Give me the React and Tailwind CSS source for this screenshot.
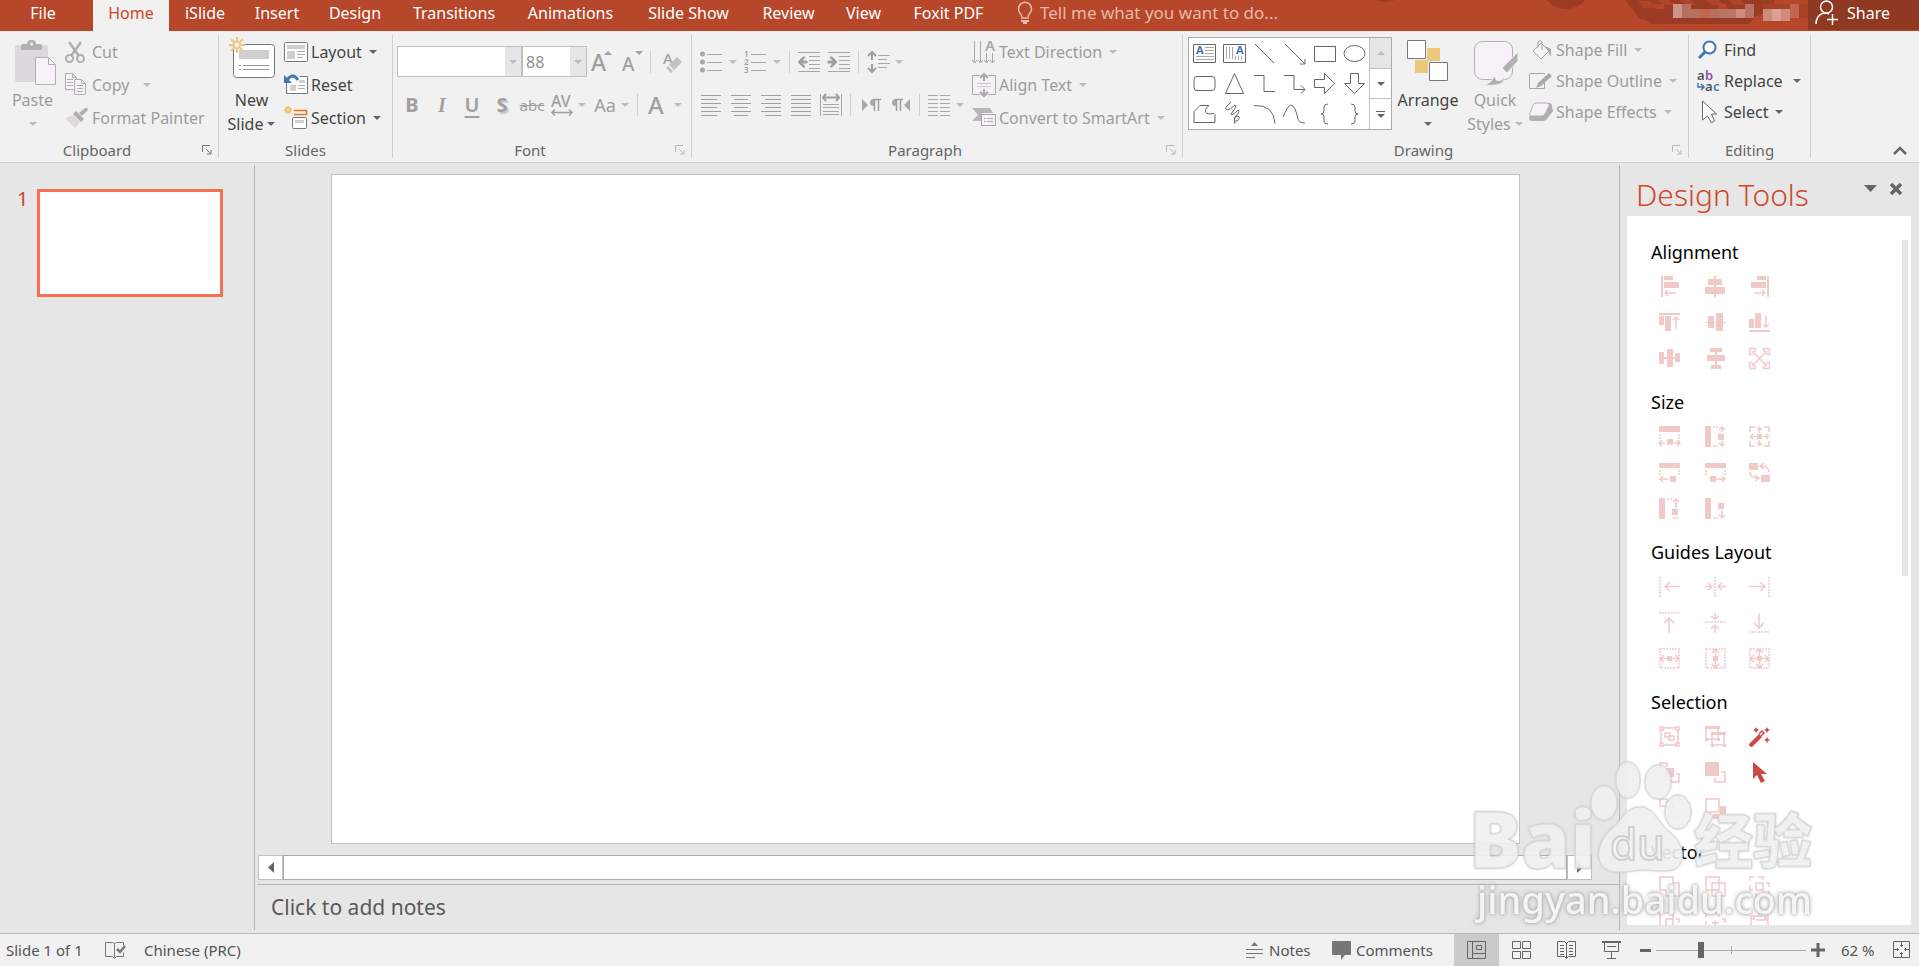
import React, { useState } from "react";

const tabs = [
  { name: "Home", width: "w-[76px]" },
  { name: "iSlide", width: "w-[72px]" },
  { name: "Insert", width: "w-[72px]" },
  { name: "Design", width: "w-[84px]" },
  { name: "Transitions", width: "w-[114px]" },
  { name: "Animations", width: "w-[119px]" },
  { name: "Slide Show", width: "w-[117px]" },
  { name: "Review", width: "w-[83px]" },
  { name: "View", width: "w-[67px]" },
  { name: "Foxit PDF", width: "w-[103px]" },
];

// f = filled path, s = stroked path, d = dotted path
const toolSections = [
  {
    title: "Alignment",
    tools: [
      { name: "Align left", f: "M2 0h2v21h-2z M5 0h9v4h-9z M5 6h15v6h-15z", s: "M6 17h11 M9 14l-3 3l3 3" },
      { name: "Align center", f: "M9 0h2v21h-2z M3 3h14v6h-14z M0 11h20v7h-20z" },
      { name: "Align right", f: "M18 0h2v21h-2z M8 0h9v4h-9z M2 6h15v6h-15z", s: "M5 17h11 M13 14l3 3l-3 3" },
      { name: "Align top", f: "M0 1h21v2h-21z M0 4h5v9h-5z M6 4h6v15h-6z", s: "M17 5v12 M14 8l3-3l3 3" },
      { name: "Align middle", f: "M0 10h21v1h-21z M3 4h6v12h-6z M11 1h7v18h-7z" },
      { name: "Align bottom", f: "M0 18h21v2h-21z M0 7h5v9h-5z M6 1h6v15h-6z", s: "M17 4v11 M14 12l3 3l3-3" },
      { name: "Distribute horizontally", f: "M0 4h5v12h-5z M8 1h6v18h-6z M16 5h5v9h-5z M0 9h21v2h-21z" },
      { name: "Distribute vertically", f: "M5 0h12v4h-12z M2 7h18v6h-18z M6 17h10v4h-10z M10 0h2v21h-2z" },
      { name: "Expand", s: "M3 3l15 15 M18 3L3 18 M0.500 6.500v-5l1-1h5v2l-4 4z M14.500 0.500h5l1 1v5h-2l-4-4z M0.500 14.500v5l1 1h5v-2l-4-4z M14.500 20.500h5l1-1v-5h-2l-4 4z" },
    ],
  },
  {
    title: "Size",
    tools: [
      { name: "Equal width", f: "M0 0h21v6h-21z M8 13h6v6h-6z", s: "M6 17H1 M3 14l-3 3l3 3 M15 17h5 M18 14l3 3l-3 3", d: "M1 8v5 M20 8v5" },
      { name: "Equal height", f: "M0 0h6v21h-6z M13 8h6v6h-6z", s: "M17 6V1 M14 4l3-3l3 3 M17 15v5 M14 17l3 3l3-3", d: "M8 1h6 M8 20h6" },
      { name: "Equal size", f: "M8 8h5v5h-5z", s: "M1 6V1h5 M15 1h5v5 M1 15v5h5 M15 20h5v-5 M10.500 7V2 M8 4l2.500-2.500l2.500 2.500 M10.500 14v5 M8 17l2.500 2.500l2.500-2.500 M7 10.500H1 M4 8l-2.500 2.500l2.500 2.500 M14 10.500h6 M17 8l2.500 2.500l-2.500 2.500" },
      { name: "Stretch left", f: "M0 1h21v5h-21z M11 14h6v6h-6z", s: "M9 17H1 M4 14l-3 3l3 3", d: "M1 8v5 M20 8v5" },
      { name: "Stretch right", f: "M0 1h21v5h-21z M5 14h6v6h-6z", s: "M12 17h8 M17 14l3 3l-3 3", d: "M1 8v5 M20 8v5" },
      { name: "Swap size", f: "M0 1h9v7h-9z M12 13h9v7h-9z", s: "M20 10c0-4-3-6-8-6 M15 1l-4 3l4 3 M1 10c0 4 3 6 8 6 M6 13l4 3l-4 3" },
      { name: "Stretch up", f: "M0 0h6v21h-6z M13 11h6v6h-6z", s: "M17 10V1 M14 4l3-3l3 3", d: "M8 1h6 M14 20h6" },
      { name: "Stretch down", f: "M0 0h6v21h-6z M13 5h6v6h-6z", s: "M17 12v8 M14 17l3 3l3-3", d: "M8 20h6" },
    ],
  },
  {
    title: "Guides Layout",
    tools: [
      { name: "Guide left", s: "M6 10.500h15 M11 6l-5 4.500l5 4.500", d: "M1 1v20" },
      { name: "Guide center", s: "M0 10.500h7 M3 7l4 3.500l-4 3.500 M21 10.500h-7 M17 7l-4 3.500l4 3.500", d: "M10 1v20" },
      { name: "Guide right", s: "M0 10.500h15 M11 6l5 4.500l-5 4.500", d: "M20 1v20" },
      { name: "Guide top", s: "M10 21V6 M5 11l5-5l5 5", d: "M0 1h21" },
      { name: "Guide middle", s: "M10 1v6 M6 4l4 3l4-3 M10 21v-6 M6 17l4-4l4 4", d: "M0 10h21" },
      { name: "Guide bottom", s: "M10 1v14 M5 11l5 5l5-5", d: "M0 20h21" },
      { name: "Guide width", f: "M8 8h5v5h-5z", s: "M1 10.500h19 M5 7l-4 3.500l4 3.500 M16 7l4 3.500l-4 3.500", d: "M1 1h19v19h-19z" },
      { name: "Guide height", f: "M8 8h5v5h-5z", s: "M10.500 1v19 M7 5l3.500-4l3.500 4 M7 16l3.500 4l3.500-4", d: "M1 1h19v19h-19z" },
      { name: "Guide frame", f: "M8 8h5v5h-5z", s: "M10.500 1v19 M7 5l3.500-4l3.500 4 M7 16l3.500 4l3.500-4 M1 10.500h19 M5 7l-4 3.500l4 3.500 M16 7l4 3.500l-4 3.500", d: "M1 1h19v19h-19z" },
    ],
  },
  {
    title: "Selection",
    tools: [
      { name: "Group", s: "M2 4v13 M19 4v13 M4 2h13 M4 19h13 M1 1h3v3h-3z M17 1h3v3h-3z M1 17h3v3h-3z M17 17h3v3h-3z M6 7h5v4h-5z M10 10h5v4h-5z" },
      { name: "Select overlap", f: "M0 0h15v3h-15z M6 6h15v3h-15z M0 12h3v3h-3z M12 12h3v3h-3z M6 18h3v3h-3z M18 18h3v3h-3z", s: "M1 2v11h12v-11 M7 8v11h12v-11" },
      { name: "Magic select", active: true, f: "M0 18l10-10l3 3l-10 10h-1l-2-2z M7 1l1 2l2 1l-2 1l-1 2l-1-2l-2-1l2-1z M18 1l1 2l2 1l-2 1l-1 2l-1-2l-2-1l2-1z M18 11l1 2l2 1l-2 1l-1 2l-1-2l-2-1l2-1z", s: "M10 8l3-3l2 2l-3 3" },
      { name: "Send back", f: "M6 6h9v9h-9z", s: "M1 8V1h7v4 M4 10H1V8 M17 12h3v8h-8v-3" },
      { name: "Bring front", f: "M0 0h14v14h-14z", s: "M16 10h4v10h-10v-4" },
      { name: "Select objects", active: true, f: "M4 0v17l4-4l4 8l4-2l-4-7h6z" },
      { name: "Similar", f: "M7 8h3v3h-3z M11 6h4v4h-4z", s: "M1 1h7v7h-7z M12 12h8v8h-8z" },
      { name: "Invert", f: "M15 8h6v8h-6z M8 16h7v5h-7z", s: "M1 1h13v13h-13z" },
    ],
  },
  {
    title: "Vector",
    tools: [
      { name: "Union", s: "M1 1h13v6h6v13h-13v-6h-6z" },
      { name: "Combine", s: "M1 1h13v13h-13z M7 7h13v13h-13z" },
      { name: "Intersect", s: "M7 7h7v7h-7z M1 5v-4h4 M9 1h5v3 M1 9v5h3 M17 7h3v4 M20 15v5h-4 M12 20h-5v-3" },
      { name: "Subtract", s: "M1 1h13v6h-7v7h-6z M7 7h7v7h-7z M17 7h3v4 M20 15v5h-4" },
      { name: "Fragment", s: "M1 5v-4h4 M9 1h5v4 M1 9v5h3 M17 7h3v4 M10 8v6 M7 11h7 M20 15v5h-4" },
      { name: "Edit points", s: "M1 14h3v3h-3z M2 14V6 M5 4h5 M10 1h3v3h-3z M2 4h3v3h-3z M16 4h3v3h-3z M7 8h12v10" },
    ],
  },
];

const Caret = ({ light, className = "" }) => (
  <svg width="8" height="4" viewBox="0 0 8 4" className={`shrink-0 ${className}`}>
    <path d="M0 0h8L4 4z" fill={light ? "#bcbcbc" : "#666"} />
  </svg>
);

const Divider = ({ className = "" }) => <span className={`h-[22px] w-px bg-[#cfcfcf] ${className}`} />;

const Svg = ({ w = 24, h = 24, children, className = "" }) => (
  <svg width={w} height={h} viewBox={`0 0 ${w} ${h}`} fill="none" className={`shrink-0 overflow-visible ${className}`}>
    {children}
  </svg>
);

const Group = ({ label, width, children, launcher, darkLauncher }) => (
  <section aria-label={label} className={`relative flex shrink-0 flex-col justify-between border-r border-[#d0d0d0] ${width}`}>
    <div className="flex">{children}</div>
    <div className={`text-center text-[15px] leading-4 text-[#666] ${launcher ? "pr-6" : ""}`}>{label}</div>
    {launcher && (
      <button aria-label={`${label} options`} className="absolute right-[6px] bottom-[3px]">
        <Svg w={10} h={10}>
          <path d="M0.500 7V0.500H8M4 4l5 5M9 5v4H5" stroke={darkLauncher ? "#777" : "#b8b8b8"} />
        </Svg>
      </button>
    )}
  </section>
);

// Small ribbon command: icon, text and an optional drop-down arrow
const Command = ({ icon, label, caret, light, row = "h-[33px]", caretGap = "ml-[7px]" }) => (
  <button className={`flex items-center text-base whitespace-nowrap ${row} ${light ? "text-[#9c9c9c]" : "text-[#444]"}`}>
    <span className="mr-px flex w-[26px] shrink-0 justify-start">{icon}</span>
    {label}
    {caret && <Caret light={light} className={caretGap} />}
  </button>
);

const BigCommand = ({ icon, line1, line2, caretOnly, light, width }) => (
  <button className={`flex shrink-0 flex-col items-center text-base leading-6 ${width} ${light ? "text-[#9c9c9c]" : "text-[#444]"}`}>
    <span className="flex h-[53px] items-start justify-center">{icon}</span>
    <span className="h-6">{line1}</span>
    <span className="flex h-6 items-center gap-1">
      {!caretOnly && line2}
      <Caret light={light} />
    </span>
  </button>
);

const PasteIcon = () => (
  <Svg w={42} h={46} className="mt-[5px]">
    <rect x="0" y="5" width="33" height="37" rx="2" fill="#dcd8dc" />
    <path d="M6 10V6q0-2 2-2h4q0-4 4-4h1q4 0 4 4h4q2 0 2 2v4z" fill="#b2b0b2" />
    <circle cx="16.500" cy="4" r="1.500" fill="#f1f1f1" />
    <path d="M20.500 17.500h13l7 7v20h-20z" fill="#f5f1f6" stroke="#b2b0b2" />
    <path d="M33.500 17.500v7h7" stroke="#b2b0b2" />
  </Svg>
);

const CutIcon = () => (
  <Svg w={20} h={22}>
    <path d="M4 1l10 14M16 1L6 15" stroke="#b0aeb0" strokeWidth="2.500" />
    <circle cx="4.500" cy="17.500" r="3.500" stroke="#b0aeb0" strokeWidth="2" />
    <circle cx="15.500" cy="17.500" r="3.500" stroke="#b0aeb0" strokeWidth="2" />
  </Svg>
);

const CopyIcon = () => (
  <Svg w={21} h={23}>
    <path d="M0.500 0.500h7l4 4v12h-11z M7.500 0.500v4h4" fill="#f5f1f6" stroke="#b0aeb0" />
    <path d="M2 6.500h6M2 9.500h6M2 12.500h6" stroke="#b0aeb0" />
    <path d="M9.500 6.500h7l4 4v11h-11z M16.500 6.500v4h4" fill="#f5f1f6" stroke="#b0aeb0" />
    <path d="M12 12.500h6M12 15.500h6M12 18.500h6" stroke="#b0aeb0" />
  </Svg>
);

const BrushIcon = () => (
  <Svg w={24} h={22}>
    <path d="M0 11l8-3l7 7l-5 6z" fill="#dcd8dc" />
    <path d="M8 7l3-3l8 8l-3 3z M14 6l6-5q3-1 3 2l-6 6z" fill="#b0aeb0" />
  </Svg>
);

const Sun = ({ x, y, r }) => (
  <g transform={`translate(${x} ${y})`} stroke="#efc77c" strokeWidth="2">
    <circle r={r * 0.4} fill="#fff" />
    {[0, 45, 90, 135, 180, 225, 270, 315].map((a) => (
      <path key={a} d={`M${r * 0.5} 0H${r}`} transform={`rotate(${a})`} />
    ))}
  </g>
);

const NewSlideIcon = () => (
  <Svg w={46} h={42} className="mt-[2px]">
    <rect x="4.500" y="7.500" width="41" height="33" rx="3" fill="#fff" stroke="#777" />
    <path d="M10 13h30v9h-30z" fill="#cfcfcf" />
    <path d="M10 28.500h2M14 28.500h26M10 32.500h2M14 32.500h26" stroke="#999" />
    <rect x="0" y="0" width="12" height="12" fill="#f1f1f1" />
    <Sun x={8} y={8} r={8} />
  </Svg>
);

const LayoutIcon = () => (
  <Svg w={24} h={20}>
    <rect x="0.500" y="0.500" width="23" height="19" rx="1" fill="#fff" stroke="#777" />
    <path d="M3 3h18v4h-18z M3 9h8v8h-8z" fill="#cfcfcf" />
    <path d="M13 9.500h8M13 12.500h8M13 15.500h6" stroke="#aaa" />
  </Svg>
);

const ResetIcon = () => (
  <Svg w={24} h={21}>
    <path d="M2.500 5v14.500h21v-17h-8" fill="#fff" stroke="#777" />
    <path d="M6 11h6v6h-6z M15 6h6v3h-6z" fill="#cfcfcf" />
    <path d="M14 11.500h7M14 14.500h7" stroke="#aaa" />
    <path d="M14 6Q9-2 3 6" stroke="#3f77b5" strokeWidth="3" />
    <path d="M0 1v8h8z" fill="#3f77b5" />
  </Svg>
);

const SectionIcon = () => (
  <Svg w={24} h={23}>
    <Sun x={4} y={4} r={4} />
    <path d="M10 4.500h12.500v4H10" stroke="#e0781e" strokeWidth="1.500" />
    <rect x="8.500" y="11.500" width="14" height="11" rx="1" fill="#fff" stroke="#777" />
    <path d="M11 14h9v3h-9z" fill="#cfcfcf" />
  </Svg>
);

const lines = (rows) => rows.map(([a, b], i) => `M${a} ${i * 4 + 1.5}H${b}`).join("");

const justifyIcons = [
  { name: "Align Left", d: lines([[1, 21], [1, 17], [1, 21], [1, 17], [1, 21], [1, 17]]) },
  { name: "Center", d: lines([[1, 21], [4, 18], [1, 21], [4, 18], [1, 21], [4, 18]]) },
  { name: "Align Right", d: lines([[1, 21], [5, 21], [1, 21], [5, 21], [1, 21], [5, 21]]) },
  { name: "Justify", d: lines([[1, 21], [1, 21], [1, 21], [1, 21], [1, 21], [1, 21]]) },
];

const shapeIcons = [
  { name: "Text box", text: true, d: "M0.500 2.500h22v18h-22z", g: "M12 5.500h9M12 8.500h9M12 11.500h9M3 14.500h18M3 17.500h18" },
  { name: "Vertical text box", text: true, right: true, d: "M0.500 2.500h22v18h-22z", g: "M3.500 5v12M6.500 5v12M9.500 5v12M12.500 14v4M15.500 14v4M18.500 14v4" },
  { name: "Line", d: "M2 2l19 19" },
  { name: "Arrow", d: "M2 2l20 20M22 17v5h-5" },
  { name: "Rectangle", d: "M1.500 4.500h21v15h-21z" },
  { name: "Oval", d: "M1 11.500a10.500 8 0 1 0 21 0a10.500 8 0 1 0-21 0" },
  { name: "Rounded rectangle", d: "M4 4.500h15q3 0 3 3v8q0 3-3 3h-15q-3 0-3-3v-8q0-3 3-3z" },
  { name: "Triangle", d: "M11.500 1.500l9 20h-18z" },
  { name: "Elbow connector", d: "M1 3.500h10v16h11" },
  { name: "Elbow arrow", d: "M1 3.500h10v14h11M18 13.500l4 4l-4 4" },
  { name: "Right arrow", d: "M1.500 7.500h10v-6l10 10l-10 10v-6h-10z" },
  { name: "Down arrow", d: "M7.500 1.500h8v10h6l-10 10l-10-10h6z" },
  { name: "Freeform", d: "M7 3.500h9q-5 4-3 7q1 2 8 1l1 1v8h-21v-11z" },
  { name: "Scribble", d: "M8 0q-8 7-4 8q3 0 8-5q3 0-4 9q0 3 7-4q3 1-3 7q-2 5 2 4q4-3 1-5q-5 0-3 8" },
  { name: "Arc", d: "M1 3.500q20-1 21 18" },
  { name: "Curve", d: "M0 15Q5 3 8 3q4 0 7 14q1 4 7 4" },
  { name: "Left brace", d: "M15 2q-4 0-4 3v4q0 3-3 3q3 0 3 3v4q0 3 4 3" },
  { name: "Right brace", d: "M8 2q4 0 4 3v4q0 3 3 3q-3 0-3 3v4q0 3-4 3" },
];

const FontGroup = () => (
  <Group label="Font" width="w-[299px]" launcher>
    <div className="flex flex-col gap-[13px] pt-[11px] pl-1 text-[#a0a0a0]">
      <div className="flex h-[31px] items-center">
        <div className="flex h-[31px] w-[125px] border border-[#c0c0c0] bg-white">
          <input aria-label="Font name" className="w-0 flex-1 px-1 outline-none" />
          <button aria-label="Font list" className="flex w-4 items-center justify-center bg-[#e6e6e6]">
            <Caret light />
          </button>
        </div>
        <div className="flex h-[31px] w-[65px] border border-[#c0c0c0] bg-white">
          <input aria-label="Font size" defaultValue="88" className="w-0 flex-1 pl-[3px] text-base text-[#909090] outline-none" />
          <button aria-label="Size list" className="flex w-4 items-center justify-center bg-[#e6e6e6]">
            <Caret light />
          </button>
        </div>
        <button aria-label="Increase font size" className="flex w-[30px] items-center justify-center">
          <Svg w={22} h={24}>
            <text x="0" y="21" fontSize="23" fontWeight="500" fill="#a0a0a0">A</text>
            <path d="M13 5h8l-4-4z" fill="#a0a0a0" />
          </Svg>
        </button>
        <button aria-label="Decrease font size" className="flex w-[30px] items-center justify-center">
          <Svg w={22} h={24}>
            <text x="1" y="21" fontSize="19" fontWeight="500" fill="#a0a0a0">A</text>
            <path d="M14 1h8l-4 4z" fill="#a0a0a0" />
          </Svg>
        </button>
        <Divider className="mr-[12px] ml-[3px]" />
        <button aria-label="Clear formatting">
          <Svg w={20} h={22}>
            <text x="0" y="13" fontSize="15" fontWeight="500" fill="#a0a0a0">A</text>
            <path d="M14 6l5 5l-8 8l-5-5z" fill="#c4c0c6" />
            <path d="M5 15l5 5l-2 2l-5-5z" fill="#c4c0c6" />
          </Svg>
        </button>
      </div>
      <div className="flex h-[30px] items-center text-xl">
        <button className="w-[30px] font-bold">B</button>
        <button className="w-[30px] font-['Liberation_Serif',serif] font-bold italic">I</button>
        <button className="w-[30px] font-semibold underline underline-offset-4">U</button>
        <button className="w-[30px] font-bold text-shadow-[2px_2px_1px_#c8c8c8]">S</button>
        <button className="w-[30px] text-[15px] line-through">abc</button>
        <button aria-label="Character spacing" className="flex w-[44px] items-center gap-[5px] pl-1">
          <Svg w={22} h={22}>
            <text x="0" y="13" fontSize="16" fontWeight="500" fill="#a0a0a0">AV</text>
            <path d="M1 18.500h20M4 15.500l-3 3l3 3M18 15.500l3 3l-3 3" stroke="#a0a0a0" strokeWidth="1.500" />
          </Svg>
          <Caret light />
        </button>
        <button className="flex items-center gap-1 pl-[2px]">
          <span className="w-6 text-lg">Aa</span>
          <Caret light />
        </button>
        <Divider className="mr-[10px] ml-2" />
        <button aria-label="Font color" className="flex items-center gap-[10px] text-2xl leading-[30px] font-medium">
          A
          <Caret light />
        </button>
      </div>
    </div>
  </Group>
);

const ParagraphGroup = () => (
  <Group label="Paragraph" width="w-[491px]" launcher>
    <div className="flex w-[280px] shrink-0 flex-col gap-[13px] pt-[11px] pl-2">
      <div className="flex h-[31px] items-center">
        <button aria-label="Bullets" className="flex items-center gap-[7px]">
          <Svg w={22} h={22}>
            <path d="M7 3.500h15M7 11.500h15M7 19.500h15" stroke="#a8a8a8" />
            <circle cx="2.500" cy="3" r="2.500" fill="#a8a8a8" />
            <circle cx="2.500" cy="11" r="2.500" fill="#a8a8a8" />
            <circle cx="2.500" cy="19" r="2.500" fill="#a8a8a8" />
          </Svg>
          <Caret light />
        </button>
        <button aria-label="Numbering" className="ml-[7px] flex items-center gap-[7px]">
          <Svg w={22} h={24}>
            <path d="M7 4.500h15M7 12.500h15M7 20.500h15" stroke="#a8a8a8" />
            <text x="0" y="7" fontSize="8" fontWeight="600" fill="#a0a0a0">1</text>
            <text x="0" y="15" fontSize="8" fontWeight="600" fill="#a0a0a0">2</text>
            <text x="0" y="23" fontSize="8" fontWeight="600" fill="#a0a0a0">3</text>
          </Svg>
          <Caret light />
        </button>
        <Divider className="mx-2" />
        <button aria-label="Decrease indent" className="mr-2">
          <Svg w={22} h={22}>
            <path d="M0 1.500h22M11 5.500h11M11 9.500h11M11 13.500h11M11 17.500h11M0 20.500h22" stroke="#a8a8a8" />
            <path d="M0 11l5-5h2l-3 4h5v2h-5l3 4h-2z" fill="#a0a0a0" stroke="#a0a0a0" />
          </Svg>
        </button>
        <button aria-label="Increase indent">
          <Svg w={22} h={22}>
            <path d="M0 1.500h22M11 5.500h11M11 9.500h11M11 13.500h11M11 17.500h11M0 20.500h22" stroke="#a8a8a8" />
            <path d="M9 11l-5-5h-2l3 4h-5v2h5l-3 4h2z" fill="#a0a0a0" stroke="#a0a0a0" />
          </Svg>
        </button>
        <Divider className="mr-[9px] ml-2" />
        <button aria-label="Line spacing" className="flex items-center gap-[5px]">
          <Svg w={22} h={24}>
            <path d="M4 3v7M0 6l4-4l4 4M4 14v7M0 18l4 4l4-4" stroke="#a0a0a0" strokeWidth="2" />
            <path d="M10 5.500h12M10 9.500h9M10 13.500h12M10 17.500h9" stroke="#a8a8a8" />
          </Svg>
          <Caret light />
        </button>
      </div>
      <div className="flex h-[30px] items-center gap-2">
        {justifyIcons.map((icon) => (
          <button key={icon.name} aria-label={icon.name}>
            <Svg w={22} h={22}>
              <path d={icon.d} stroke="#a0a0a0" />
            </Svg>
          </button>
        ))}
        <button aria-label="Distribute">
          <Svg w={22} h={24}>
            <path d="M0.500 1v22M21.500 1v22M3 11.500h16M3 14.500h16M3 18.500h16M3 21.500h16" stroke="#a8a8a8" />
            <path d="M3 4.500h16M6 1l-3 3.500l3 3.500M16 1l3 3.500l-3 3.500" stroke="#a0a0a0" strokeWidth="2" />
          </Svg>
        </button>
        <Divider />
        <button aria-label="Left to right" className="w-[22px] pl-[3px]">
          <Svg w={19} h={14}>
            <path d="M0 1l6 6l-6 6z M8 5q0-4 4-4v7q-4 0-4-3z" fill="#a8a8a8" />
            <path d="M11 1.500h8M12.500 1v12M16.500 1v12" stroke="#a0a0a0" strokeWidth="1.500" />
          </Svg>
        </button>
        <button aria-label="Right to left" className="w-[22px] pl-[3px]">
          <Svg w={19} h={14}>
            <path d="M18 1l-6 6l6 6z M0 5q0-4 4-4v7q-4 0-4-3z" fill="#a8a8a8" />
            <path d="M3 1.500h8M4.500 1v12M8.500 1v12" stroke="#a0a0a0" strokeWidth="1.500" />
          </Svg>
        </button>
        <Divider />
        <button aria-label="Columns" className="flex items-center gap-[6px]">
          <Svg w={22} h={22}>
            <path d="M0 1.500h10M0 5.500h10M0 9.500h10M0 13.500h10M0 17.500h10M0 21.500h10" stroke="#a8a8a8" />
            <path d="M12 1.500h10M12 5.500h10M12 9.500h10M12 13.500h10M12 17.500h10M12 21.500h10" stroke="#a8a8a8" />
          </Svg>
          <Caret light />
        </button>
      </div>
    </div>
    <div className="flex flex-col">
      <Command
        light
        caret
        label="Text Direction"
        icon={
          <Svg w={24} h={24}>
            <path d="M2.500 1v22M8.500 1v22M14.500 13v10M20.500 13v10M0 20l2.500 3l2.500-3M6 20l2.500 3l2.500-3M12 20l2.500 3l2.500-3M18 20l2.500 3l2.500-3" stroke="#a8a8a8" />
            <text x="13" y="11" fontSize="15" fontWeight="600" fill="#a8a8a8">A</text>
          </Svg>
        }
      />
      <Command
        light
        caret
        label="Align Text"
        icon={
          <Svg w={24} h={24}>
            <path d="M8 2.500h-7.500v19h7.500M16 2.500h7.500v19h-7.500" fill="#f5f1f6" stroke="#a8a8a8" />
            <path d="M5 10.500h14M5 13.500h14" stroke="#cbc6cf" />
            <path d="M12 8V2M8 5l4-4l4 4M12 16v6M8 19l4 4l4-4" stroke="#a8a8a8" strokeWidth="2" />
          </Svg>
        }
      />
      <Command
        light
        caret
        label="Convert to SmartArt"
        icon={
          <Svg w={24} h={19}>
            <path d="M0 0h18l3 5h-11v8h-10l6-6z" fill="#b8b6b8" />
            <rect x="9.500" y="6.500" width="14" height="11" fill="#f5f1f6" stroke="#a8a8a8" />
            <path d="M12 10.500h2M15 10.500h6M12 13.500h2M15 13.500h6" stroke="#b0aeb0" />
          </Svg>
        }
      />
    </div>
  </Group>
);

const DrawingGroup = () => (
  <Group label="Drawing" width="w-[506px]" launcher>
    <div className="mt-[2px] ml-[5px] flex h-[93px] shrink-0 border border-[#ababab] bg-white">
      <div className="grid grid-cols-6">
        {shapeIcons.map((shape) => (
          <button key={shape.name} aria-label={shape.name} className="flex h-[30px] w-[30px] items-center justify-center">
            <Svg w={23} h={23}>
              <path d={shape.d} stroke="#666" />
              {shape.g && <path d={shape.g} stroke="#aaa" />}
              {shape.text && (
                <text x={shape.right ? 13 : 3} y="12" fontSize="11" fontWeight="700" fill="#3f77b5">A</text>
              )}
            </Svg>
          </button>
        ))}
      </div>
      <div className="flex w-[22px] flex-col border-l border-[#c0c0c0]">
        <button aria-label="Scroll up" className="flex flex-1 items-center justify-center bg-[#e6e6e6]">
          <Caret light className="rotate-180" />
        </button>
        <button aria-label="Scroll down" className="flex flex-1 items-center justify-center border-y border-[#c0c0c0]">
          <Caret />
        </button>
        <button aria-label="More shapes" className="flex flex-1 flex-col items-center justify-center gap-[2px]">
          <span className="h-px w-[9px] bg-[#666]" />
          <Caret />
        </button>
      </div>
    </div>
    <BigCommand
      width="w-[72px]"
      line1="Arrange"
      caretOnly
      icon={
        <Svg w={42} h={42} className="mt-[5px]">
          <path d="M20 8h13v13h-13z M8 20h13v13h-13z" fill="#efc77c" />
          <path d="M0.500 0.500h18v18h-18z M22.500 22.500h18v18h-18z" fill="#fff" stroke="#777" />
        </Svg>
      }
    />
    <BigCommand
      width="w-[62px]"
      light
      line1="Quick"
      line2="Styles"
      icon={
        <Svg w={46} h={46} className="mt-[5px]">
          <rect x="2.500" y="1.500" width="38" height="38" rx="8" fill="#f5f1f6" stroke="#b2b0b2" />
          <path d="M46 12v9l-11 12l-5-5z" fill="#b2b0b2" stroke="#f1f1f1" />
          <path d="M13 45q6-2 9-8q5-5 9-1q3 5-3 8q-5 2-15 1z" fill="#b2b0b2" stroke="#f1f1f1" />
          <circle cx="27" cy="37" r="4" fill="#f5f1f6" />
        </Svg>
      }
    />
    <div className="-mt-px flex flex-col pl-[3px]">
      <Command
        light
        caret
        row="h-[31px]"
        label="Shape Fill"
        icon={
          <Svg w={24} h={20}>
            <path d="M4 11l8-8l8 8l-8 8z" fill="#f5f1f6" stroke="#a8a8a8" />
            <path d="M9 8V2q2-3 4 0v8" stroke="#a8a8a8" />
            <path d="M16 6l6 3v8l-3-6z" fill="#a8a8a8" />
          </Svg>
        }
      />
      <Command
        light
        caret
        row="h-[31px]"
        label="Shape Outline"
        icon={
          <Svg w={24} h={18}>
            <path d="M16 1.500h-15.500v15h15v-6" stroke="#a8a8a8" />
            <path d="M7 16l2-5l11-10l3 3l-11 10z" fill="#a8a8a8" />
          </Svg>
        }
      />
      <Command
        light
        caret
        row="h-[31px]"
        label="Shape Effects"
        icon={
          <Svg w={24} h={20}>
            <path d="M6 1h14q3 0 3 3l1 5l-6 8q-2 2-4 2h-11q-3 0-3-3z" fill="#b2b0b2" />
            <path d="M7 1h11q3 0 2 3l-4 8q-1 2-3 2h-11q-2 0-1-3l3-8q1-2 3-2z" fill="#f5f1f6" stroke="#b2b0b2" />
          </Svg>
        }
      />
    </div>
  </Group>
);

const TitleArt = () => (
  <svg width="440" height="31" viewBox="0 0 440 31" className="absolute top-0 right-[111px]" aria-hidden="true">
    <g fill="#9c3b24">
      <path d="M7 0h20q-10 4-20 0z" />
      <circle cx="198" cy="-16" r="25" />
      <path d="M257 0h150q-2 10-22 18v2l-5 4h-97l-8-5h-3z" />
    </g>
    <path d="M270 1l6 7h14l-8-7z M290 0l6 5h12l-7-5z M312 0l6 5h10l-5-5z M338 0l6 5h12l-5-5z M360 0l6 5h12l-5-5z" fill="#b0442a" />
    <g>
      <path d="M287 4h9v5h-9z M350 4h9v5h-9z" fill="#b7472a" />
      <path d="M305 4h9v14h-9z" fill="#cf938a" />
      <path d="M314 4h9v14h-9z M323 9h9v9h-9z M341 9h9v9h-9z" fill="#b5705f" />
      <path d="M332 9h9v9h-9z" fill="#c2664f" />
      <path d="M350 9h18v9h-18z M377 4h9v14h-9z" fill="#b87565" />
      <path d="M368 9h9v9h-9z" fill="#cf8c7d" />
      <path d="M395 9h9v12h-9z M413 9h9v12h-9z" fill="#cf8c7d" />
      <path d="M404 9h9v12h-9z" fill="#d9a093" />
      <path d="M422 4h9v14h-9z" fill="#c2664f" />
      <path d="M395 4h27v5h-27z M431 4h9v14h-9z" fill="#a94028" />
    </g>
  </svg>
);

const Header = ({ current, onSelect }) => (
  <header className="relative flex h-[31px] shrink-0 items-center bg-[#b7472a] pb-[5px] text-base whitespace-nowrap text-white">
    <TitleArt />
    <button className="mr-[7px] w-[86px]">File</button>
    <nav className="flex self-stretch">
      {tabs.map((tab) => (
        <button
          key={tab.name}
          onClick={() => onSelect(tab.name)}
          className={`h-[31px] pb-[5px] ${tab.width} ${current === tab.name ? "bg-[#f1f1f1] text-[#d24726]" : ""}`}
        >
          {tab.name}
        </button>
      ))}
    </nav>
    <label className="ml-[17px] flex items-center gap-[7px] text-[#e9b9a9]">
      <Svg w={16} h={22}>
        <path d="M5 16q0-3-2-5a6.500 6.500 0 1 1 10 0q-2 2-2 5z" stroke="#e9b9a9" strokeWidth="1.500" />
        <path d="M4 18h8v2h-8z M6 20h4v2h-4z" fill="#e9b9a9" />
      </Svg>
      <input
        aria-label="Tell me"
        placeholder="Tell me what you want to do..."
        className="h-6 w-[270px] text-[17px] outline-none placeholder:text-[#e9b9a9]"
      />
    </label>
    <button className="relative ml-auto flex h-[30px] w-[111px] items-center gap-2 self-start bg-[#8f3822] pb-[5px] pl-[7px]">
      <Svg w={24} h={25}>
        <circle cx="11.500" cy="7" r="6" stroke="#fff" strokeWidth="1.500" />
        <path d="M1 24q0-9 8-11q3 0 5 1M17.500 14v11M12 19.500h11" stroke="#fff" strokeWidth="1.500" />
      </Svg>
      Share
    </button>
  </header>
);

const Ribbon = () => (
  <div className="flex h-[132px] shrink-0 border-b border-[#d0d0d0] bg-[#f1f1f1] py-1">
    <Group label="Clipboard" width="w-[219px]" launcher darkLauncher>
      <BigCommand width="w-[65px]" light line1="Paste" caretOnly icon={<span className="pl-[7px]"><PasteIcon /></span>} />
      <div className="flex flex-col">
        <Command light label="Cut" icon={<CutIcon />} />
        <Command light label="Copy" caret caretGap="ml-[14px]" icon={<CopyIcon />} />
        <Command light label="Format Painter" icon={<BrushIcon />} />
      </div>
    </Group>

    <Group label="Slides" width="w-[174px]">
      <BigCommand width="w-[65px]" line1="New" line2="Slide" icon={<NewSlideIcon />} />
      <div className="flex flex-col">
        <Command label="Layout" caret icon={<LayoutIcon />} />
        <Command label="Reset" icon={<ResetIcon />} />
        <Command label="Section" caret icon={<SectionIcon />} />
      </div>
    </Group>

    <FontGroup />
    <ParagraphGroup />
    <DrawingGroup />

    <Group label="Editing" width="w-[122px]">
      <div className="-mt-px flex flex-col pl-[8px]">
        <Command
          row="h-[31px]"
          label="Find"
          icon={
            <Svg w={21} h={20}>
              <circle cx="12.500" cy="7.500" r="6" fill="#fff" stroke="#3f77b5" strokeWidth="2" />
              <path d="M8 12l-6 6" stroke="#3f77b5" strokeWidth="3" />
            </Svg>
          }
        />
        <Command
          row="h-[31px]"
          label="Replace"
          caret
          caretGap="ml-[10px]"
          icon={
            <Svg w={24} h={24}>
              <text x="0" y="11" fontSize="13" fontWeight="600" fill="#555">a</text>
              <text x="8" y="11" fontSize="13" fontWeight="600" fill="#8a53ab">b</text>
              <text x="8" y="22" fontSize="13" fontWeight="600" fill="#555">a</text>
              <text x="16" y="22" fontSize="13" fontWeight="600" fill="#3f77b5">c</text>
              <path d="M1 14v4h5M4 15l3 3l-3 3" stroke="#3f77b5" strokeWidth="1.500" />
            </Svg>
          }
        />
        <Command
          row="h-[31px]"
          label="Select"
          caret
          icon={
            <Svg w={20} h={24} className="ml-[5px]">
              <path d="M0.500 1v19l5-4l4 7l3-2l-3-7h5z" fill="#fff" stroke="#666" />
            </Svg>
          }
        />
      </div>
    </Group>

    <button aria-label="Collapse the ribbon" className="mr-3 mb-[3px] ml-auto self-end">
      <Svg w={14} h={9}>
        <path d="M1 8l6-6l6 6" stroke="#666" strokeWidth="2.500" />
      </Svg>
    </button>
  </div>
);

const ToolIcon = ({ tool }) => {
  const color = tool.active ? "#cd4747" : "#f1c9c9";
  return (
    <Svg w={21} h={21}>
      {tool.f && <path d={tool.f} fill={color} />}
      {tool.s && <path d={tool.s} stroke={color} strokeWidth="1.500" />}
      {tool.d && <path d={tool.d} stroke={color} strokeWidth="1.500" strokeDasharray="2 1" />}
    </Svg>
  );
};

const DesignPane = () => (
  <aside className="mt-[2px] mb-[3px] flex w-[300px] shrink-0 flex-col border-l border-[#b8b8b8] pr-2 pl-[7px]">
    <div className="flex h-[51px] shrink-0 items-center pb-1 pl-[9px]">
      <h2 className="pt-3 text-[30px] leading-9 font-light text-[#d24726]">Design Tools</h2>
      <button aria-label="Pane options" className="mr-3 ml-auto">
        <svg width="13" height="7" viewBox="0 0 13 7">
          <path d="M0 0h13l-6.500 7z" fill="#666" />
        </svg>
      </button>
      <button aria-label="Close pane" className="mr-2">
        <Svg w={14} h={14}>
          <path d="M2 2l10 10M12 2L2 12" stroke="#666" strokeWidth="3.500" />
        </Svg>
      </button>
    </div>
    <div className="mb-[5px] flex min-h-0 flex-1 justify-between overflow-hidden bg-white pr-[3px]">
      <div className="pt-[18px] pl-6">
        {toolSections.map((section) => (
          <section key={section.title} className="pb-2">
            <h3 className="h-[34px] text-lg leading-9 text-black">{section.title}</h3>
            <div className="grid grid-cols-[46px_44px_45px]">
              {section.tools.map((tool) => (
                <button key={tool.name} aria-label={tool.name} className="flex h-9 items-center pl-2">
                  <ToolIcon tool={tool} />
                </button>
              ))}
            </div>
          </section>
        ))}
      </div>
      <div className="mt-6 h-[336px] w-[6px] bg-[#e6e6e6]" />
    </div>
  </aside>
);

const Workspace = () => (
  <main className="flex min-w-0 flex-1 flex-col">
    <div className="mt-[11px] mr-[99px] ml-[76px] flex-1 border border-[#c0c0c0] bg-white" />
    <div className="mt-[11px] mr-[27px] ml-[3px] flex h-[25px]">
      <button aria-label="Scroll left" className="flex w-[25px] items-center justify-center border border-[#c0c0c0] bg-white">
        <svg width="6" height="11" viewBox="0 0 6 11">
          <path d="M6 0v11l-6-5.500z" fill="#666" />
        </svg>
      </button>
      <div className="flex-1 border border-[#ababab] bg-white" />
      <button aria-label="Scroll right" className="flex w-[25px] items-center justify-center border border-[#c0c0c0] bg-white">
        <svg width="6" height="11" viewBox="0 0 6 11">
          <path d="M0 0v11l6-5.500z" fill="#666" />
        </svg>
      </button>
    </div>
    <div className="mt-1 ml-[2px] h-[49px] border-t border-[#b8b8b8]">
      <textarea
        aria-label="Notes"
        placeholder="Click to add notes"
        className="h-[44px] w-full resize-none pt-2 pl-[14px] text-[21px] leading-7 outline-none placeholder:text-[#595959]"
      />
    </div>
  </main>
);

const Watermark = () => (
  <svg
    width="352"
    height="180"
    viewBox="0 0 352 180"
    className="pointer-events-none absolute right-[97px] bottom-[6px] drop-shadow-[0_0_1px_#bbb]"
    aria-hidden="true"
  >
    <g fill="#fff" fillOpacity="0.700" stroke="#d8d8d8" strokeWidth="1">
      <text x="-1" y="121" fontSize="78" fontWeight="800" className="font-['Open_Sans',sans-serif]">Bai</text>
      <ellipse cx="134" cy="56" rx="13" ry="17" />
      <ellipse cx="158" cy="33" rx="12" ry="18" />
      <ellipse cx="188" cy="35" rx="13" ry="17" />
      <ellipse cx="208" cy="65" rx="13" ry="17" />
      <path d="M170 60c-14 0-18 14-28 22c-10 8-16 22-12 32c6 16 26 10 41 9s34 6 40-8c4-12-2-22-13-31c-10-8-14-24-28-24z" />
      <text x="224" y="116" fontSize="59" fontWeight="900" className="font-['Noto_Sans_CJK_SC',sans-serif]">经验</text>
    </g>
    <text x="140" y="113" fontSize="44" fontWeight="500" fill="#fff" fillOpacity="0.300" stroke="#d0d0d0" strokeWidth="2">du</text>
    <text x="7" y="167" fontSize="38" fontWeight="500" fill="#fff" fillOpacity="0.850" className="drop-shadow-[0_0_2px_#aaa]">
      jingyan.baidu.com
    </text>
  </svg>
);

const StatusBar = () => (
  <footer className="flex h-[33px] shrink-0 items-center border-t border-[#b8b8b8] bg-[#f1f1f1] text-[15px] whitespace-nowrap text-[#555]">
    <button className="ml-[6px] w-[99px] text-left">Slide 1 of 1</button>
    <button aria-label="Spelling" className="mr-[18px]">
      <Svg w={21} h={18}>
        <path d="M9.500 2.500l-2-1h-7v14h7l2 2l2-2h7v-4M9.500 2.500v14M9.500 2.500l2-1h7v3" stroke="#777" />
        <path d="M12 8l3 3l5-6" stroke="#777" strokeWidth="2.500" />
      </Svg>
    </button>
    <button>Chinese (PRC)</button>

    <button className="ml-auto flex w-[86px] items-center gap-[6px]">
      <Svg w={17} h={18}>
        <path d="M5 5h7L8.500 1z" fill="#777" />
        <path d="M0 8.500h17M0 12.500h17M0 16.500h9" stroke="#777" />
      </Svg>
      Notes
    </button>
    <button className="flex w-[122px] items-center gap-[5px]">
      <Svg w={19} h={19}>
        <path d="M1 0h17q1 0 1 1v12q0 1-1 1h-5l-4 5v-5h-8q-1 0-1-1v-12q0-1 1-1z" fill="#777" />
      </Svg>
      Comments
    </button>
    <button aria-label="Normal view" className="flex w-[45px] items-center justify-center self-stretch bg-[#cacaca]">
      <Svg w={20} h={19}>
        <path d="M0.500 0.500h18v17h-18z M5.500 1v16M5.500 12.500h13M9.500 4.500h5v4h-5z" stroke="#666" />
      </Svg>
    </button>
    <button aria-label="Slide sorter" className="flex w-[45px] justify-center">
      <Svg w={20} h={19}>
        <path d="M0.500 0.500h8v7h-8z M10.500 0.500h8v7h-8z M0.500 10.500h8v7h-8z M10.500 10.500h8v7h-8z" stroke="#666" />
      </Svg>
    </button>
    <button aria-label="Reading view" className="flex w-[45px] justify-center">
      <Svg w={20} h={19}>
        <path d="M9.500 2.500l-2-2h-7v15h7l2 2l2-2h7v-15h-7z" stroke="#666" />
        <path d="M9.500 2v15M3 4.500h4M3 7.500h4M3 10.500h4M3 13.500h4M12 4.500h4M12 7.500h4M12 10.500h4M12 13.500h4" stroke="#666" />
      </Svg>
    </button>
    <button aria-label="Slide show" className="flex w-[45px] justify-center">
      <Svg w={20} h={19}>
        <path d="M0 0h19v2h-19z" fill="#666" />
        <path d="M2.500 2v8.500h14v-8.500M5 5.500h9M9.500 11v7M5 17.500h9" stroke="#666" />
      </Svg>
    </button>
    <button aria-label="Zoom out" className="mr-1 ml-[6px] flex h-4 w-3 items-center">
      <span className="h-[3px] w-[11px] bg-[#666]" />
    </button>
    <div className="relative flex h-4 w-[150px] items-center">
      <span className="absolute top-1 left-[75px] h-2 w-px bg-[#ababab]" />
      <input
        type="range"
        aria-label="Zoom"
        min="0"
        max="100"
        defaultValue="29"
        className="h-px w-full appearance-none bg-[#ababab] outline-none [&::-webkit-slider-thumb]:relative [&::-webkit-slider-thumb]:h-4 [&::-webkit-slider-thumb]:w-[6px] [&::-webkit-slider-thumb]:appearance-none [&::-webkit-slider-thumb]:bg-[#666]"
      />
    </div>
    <button aria-label="Zoom in" className="ml-[5px]">
      <Svg w={14} h={14}>
        <path d="M7 0v14M0 7h14" stroke="#666" strokeWidth="3" />
      </Svg>
    </button>
    <button className="ml-4 w-[52px] text-left">62 %</button>
    <button aria-label="Fit to window" className="mr-2">
      <Svg w={18} h={18}>
        <path d="M0.500 0.500h16v16h-16z M8.500 1v5M8.500 11v5M1 8.500h5M11 8.500h5M7 4.500h3M7 12.500h3M4.500 7v3M12.500 7v3" stroke="#666" />
      </Svg>
    </button>
  </footer>
);

const App = () => {
  const [current, setCurrent] = useState("Home");

  return (
    <div className="flex h-screen flex-col overflow-hidden bg-[#e6e6e6] font-['Noto_Sans','Open_Sans',sans-serif]">
      <Header current={current} onSelect={setCurrent} />
      <Ribbon />
      <div className="relative flex min-h-0 flex-1">
        <nav aria-label="Slides" className="mt-[2px] mb-[3px] flex w-[255px] shrink-0 items-start border-r border-[#b8b8b8] pt-6 pl-[17px]">
          <span className="w-5 text-xl leading-5 text-[#d24726]">1</span>
          <button aria-label="Slide 1" className="h-[108px] w-[186px] border-3 border-[#f3714f] bg-white" />
        </nav>
        <Workspace />
        <DesignPane />
        <Watermark />
      </div>
      <StatusBar />
    </div>
  );
};

export default App;
